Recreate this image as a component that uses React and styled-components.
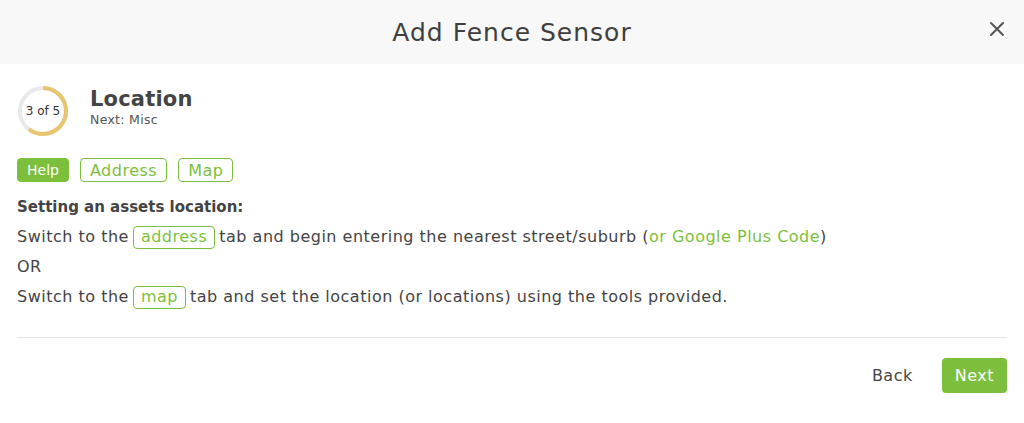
import styled, { createGlobalStyle } from "styled-components";

const Global = createGlobalStyle`
  body {
    margin: 0;
    background: #fff;
    font-family: "DejaVu Sans", "Open Sans", sans-serif;
    color: #444;
  }
`;

const green = "#7cbf3c";

const Modal = styled.div`
  width: 1024px;
  height: 423px;
  display: flex;
  flex-direction: column;
  background: #fff;
`;

const Header = styled.div`
  height: 64px;
  background: #f8f8f8;
  display: flex;
  align-items: center;
  justify-content: center;
  position: relative;
`;

const Title = styled.div`
  font-size: 25px;
  color: #3f3f3f;
  letter-spacing: 1px;
`;

const Close = styled.button`
  position: absolute;
  right: 17px;
  top: 19px;
  width: 20px;
  height: 20px;
  padding: 0;
  border: none;
  background: none;
  cursor: pointer;
  display: flex;
  align-items: center;
  justify-content: center;
`;

const Body = styled.div`
  padding: 21px 17px 0 17px;
  display: flex;
  flex-direction: column;
`;

const StepRow = styled.div`
  display: flex;
  align-items: center;
  gap: 21px;
`;

const Ring = styled.div`
  width: 52px;
  height: 52px;
  position: relative;
  display: flex;
  align-items: center;
  justify-content: center;
`;

const RingLabel = styled.span`
  position: absolute;
  font-size: 12px;
  color: #333;
`;

const StepText = styled.div`
  display: flex;
  flex-direction: column;
  margin-top: -8px;
`;

const StepTitle = styled.div`
  font-size: 21px;
  font-weight: bold;
  color: #444;
  line-height: 26px;
  letter-spacing: 0.2px;
`;

const StepNext = styled.div`
  font-size: 12.5px;
  color: #555;
  line-height: 16px;
  letter-spacing: 0.3px;
`;

const Tabs = styled.div`
  display: flex;
  gap: 11px;
  margin-top: 21px;
`;

const Tab = styled.div`
  height: 24px;
  box-sizing: border-box;
  padding: 0 9px;
  border: 1px solid ${green};
  border-radius: 4px;
  background: ${(p) => (p.$active ? green : "#fff")};
  color: ${(p) => (p.$active ? "#fff" : green)};
  font-size: ${(p) => (p.$small ? "14px" : "16px")};
  letter-spacing: ${(p) => (p.$small ? "0" : "0.5px")};
  display: flex;
  align-items: center;
`;

const Help = styled.div`
  margin-top: 12px;
  font-size: 16px;
  letter-spacing: 0.5px;
  color: #444;
`;

const HelpTitle = styled.div`
  font-weight: bold;
  line-height: 26px;
  font-size: 15px;
  letter-spacing: 0;
  margin-bottom: 2px;
`;

const Line = styled.div`
  line-height: 30px;
  height: 30px;
  display: flex;
  align-items: center;
  white-space: pre;
`;

const Chip = styled.span`
  display: inline-flex;
  align-items: center;
  height: 23px;
  box-sizing: border-box;
  padding: 0 7px;
  margin: 0 4px 0 4px;
  border: 1px solid ${green};
  border-radius: 4px;
  color: ${green};
`;

const Link = styled.span`
  color: ${green};
`;

const Divider = styled.div`
  height: 1px;
  background: #e8e8e8;
  margin-top: 25px;
`;

const Footer = styled.div`
  display: flex;
  justify-content: flex-end;
  align-items: center;
  gap: 29px;
  margin-top: 20px;
`;

const Button = styled.button`
  height: 35px;
  padding: 0 ${(p) => (p.$primary ? "13px" : "0")};
  border: none;
  border-radius: 4px;
  background: ${(p) => (p.$primary ? green : "transparent")};
  color: ${(p) => (p.$primary ? "#fff" : "#444")};
  font-family: inherit;
  font-size: 16px;
  letter-spacing: 0.5px;
  cursor: pointer;
`;

function ProgressRing() {
  const r = 23;
  const c = 2 * Math.PI * r;
  return (
    <Ring>
      <svg width="52" height="52" viewBox="0 0 52 52">
        <circle cx="26" cy="26" r={r} fill="none" stroke="#e9e9e9" strokeWidth="4" />
        <circle
          cx="26"
          cy="26"
          r={r}
          fill="none"
          stroke="#e8c56f"
          strokeWidth="4"
          strokeDasharray={`${c * 0.6} ${c}`}
          transform="rotate(-90 26 26)"
        />
      </svg>
      <RingLabel>3 of 5</RingLabel>
    </Ring>
  );
}

export default function App() {
  return (
    <>
      <Global />
      <Modal>
        <Header>
          <Title>Add Fence Sensor</Title>
          <Close aria-label="close">
            <svg width="16" height="16" viewBox="0 0 16 16">
              <path d="M2 2 L14 14 M14 2 L2 14" stroke="#555" strokeWidth="2" strokeLinecap="round" />
            </svg>
          </Close>
        </Header>
        <Body>
          <StepRow>
            <ProgressRing />
            <StepText>
              <StepTitle>Location</StepTitle>
              <StepNext>Next: Misc</StepNext>
            </StepText>
          </StepRow>
          <Tabs>
            <Tab $active $small>Help</Tab>
            <Tab>Address</Tab>
            <Tab>Map</Tab>
          </Tabs>
          <Help>
            <HelpTitle>Setting an assets location:</HelpTitle>
            <Line>
              Switch to the<Chip>address</Chip>tab and begin entering the nearest street/suburb (<Link>or Google Plus Code</Link>)
            </Line>
            <Line>OR</Line>
            <Line>
              Switch to the<Chip>map</Chip>tab and set the location (or locations) using the tools provided.
            </Line>
          </Help>
          <Divider />
          <Footer>
            <Button>Back</Button>
            <Button $primary>Next</Button>
          </Footer>
        </Body>
      </Modal>
    </>
  );
}
